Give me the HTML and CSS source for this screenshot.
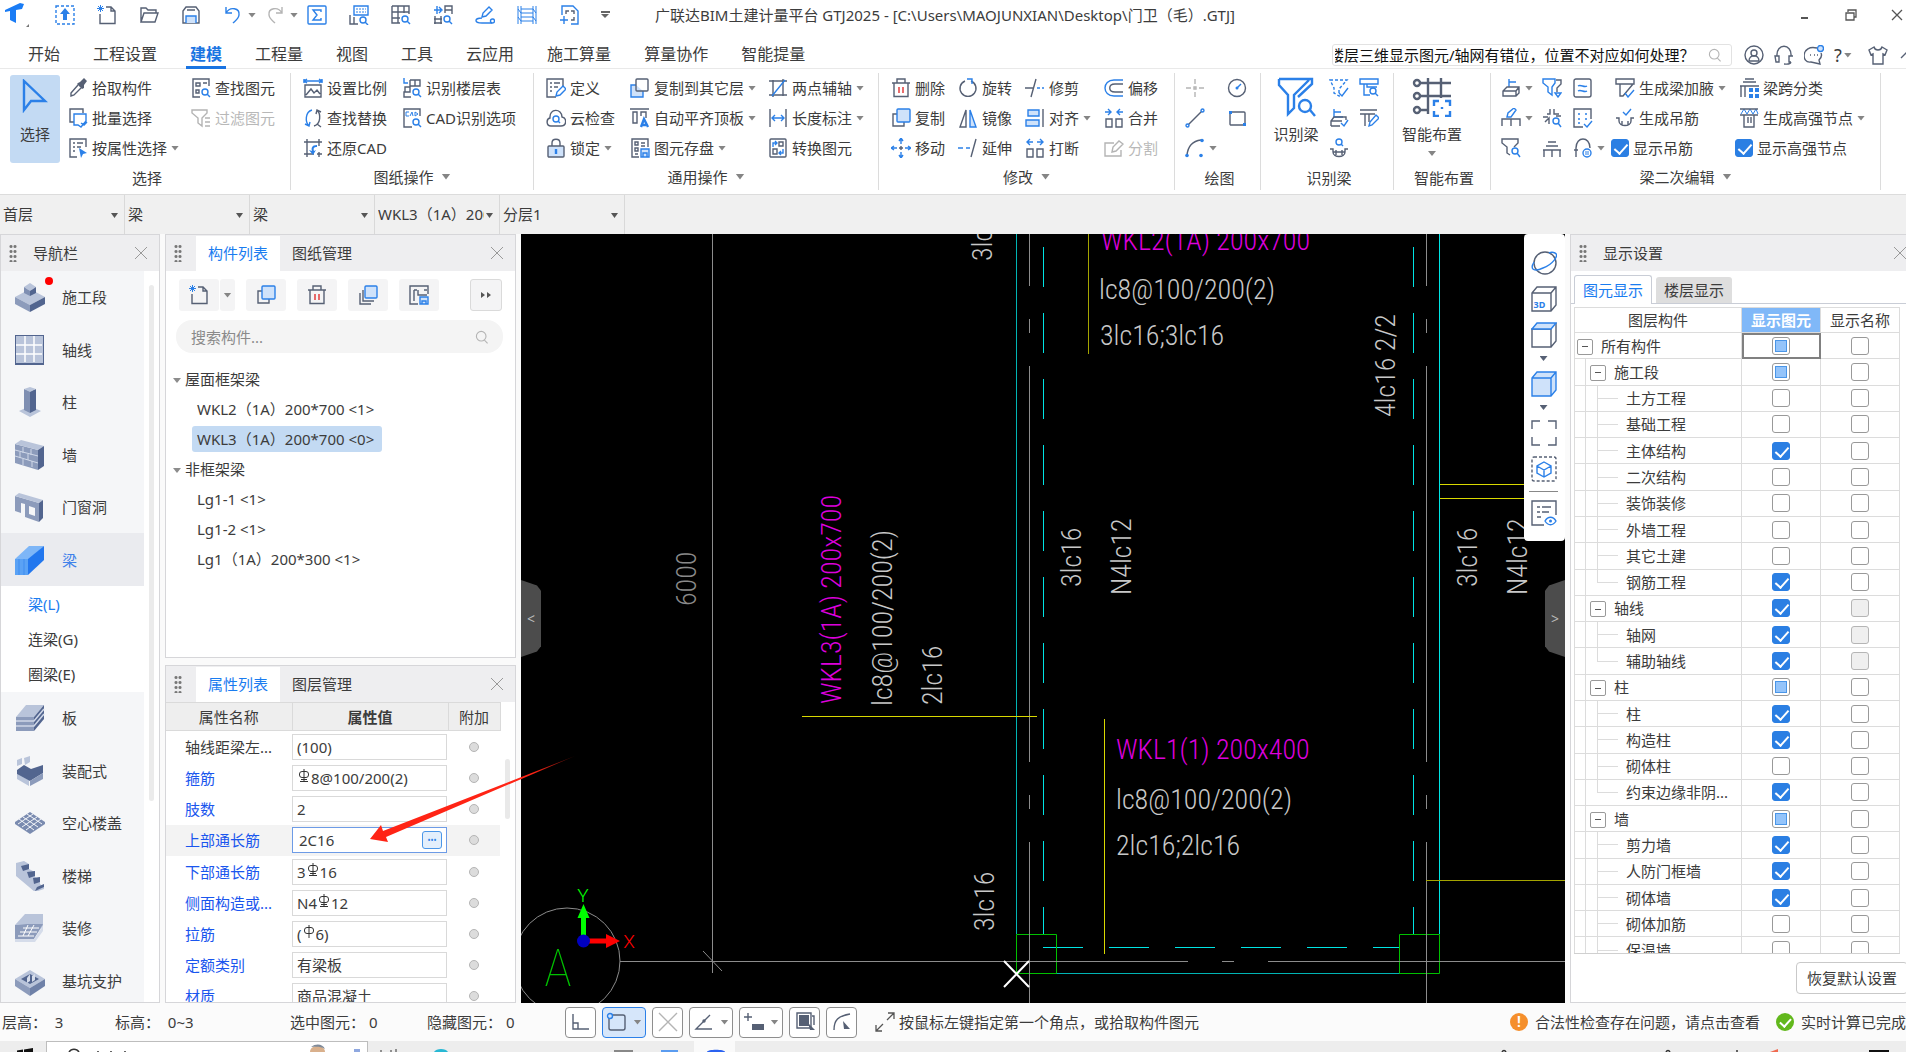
FILE: index.html
```html
<!DOCTYPE html>
<html lang="zh-CN">
<head>
<meta charset="utf-8">
<title>广联达BIM土建计量平台 GTJ2025</title>
<link rel="stylesheet" href="styles.css">
</head>
<body>
<svg class="defs" aria-hidden="true">
  <symbol id="i-marquee" viewBox="0 0 20 20"><rect class="b dash" x="1" y="1" width="18" height="18"/><path class="bf" d="M10 3l5 6h-3v6H8V9H5z"/></symbol>
  <symbol id="i-new" viewBox="0 0 20 20"><path class="d" d="M9 2h5l4 4v12.500H3V9M14 2v4h4"/><path class="b thin" d="M1 1l5 5M6 1L1 6M3.500 0v7M0 3.500h7"/></symbol>
  <symbol id="i-open" viewBox="0 0 20 20"><path class="d" d="M2 17V3h5l2 2h8v3M2 17l3-9h14l-3 9z"/></symbol>
  <symbol id="i-save" viewBox="0 0 20 20"><path class="d" d="M2 6l3-4h10l3 4v12H2zM6 5h8"/><path class="b f" d="M5 18v-7h10v7"/></symbol>
  <symbol id="i-undo" viewBox="0 0 20 20"><path class="b" d="M3 2v6h6M3 8c4-7 14-5 13 2-.500 4-4 6-6 8"/></symbol>
  <symbol id="i-redo" viewBox="0 0 20 20"><path class="g" d="M17 2v6h-6M17 8C13 1 3 3 4 10c.500 4 4 6 6 8"/></symbol>
  <symbol id="i-sum" viewBox="0 0 20 20"><rect class="b" x="1" y="1" width="18" height="18" rx="1"/><path class="b" d="M14 7V5H6l4 5-4 5h8v-2"/></symbol>
  <symbol id="i-keys" viewBox="0 0 20 20"><path class="b" d="M5 1h14v9H5z"/><path class="b thin" d="M7 4h10M7 7h10" stroke-dasharray="2 1"/><path class="d" d="M1 10v9h8M5 12v7"/><circle class="b" cx="14" cy="15" r="3"/><path class="b" d="M16 17l3 3"/></symbol>
  <symbol id="i-gridq" viewBox="0 0 20 20"><path class="d" d="M1 1h17v8M1 1v17h8M1 7h17M1 13h8M7 1v17M13 1v7"/><circle class="b" cx="14" cy="14" r="3"/><path class="b" d="M16 16l3 3"/></symbol>
  <symbol id="i-swapq" viewBox="0 0 20 20"><path class="b" d="M1 5h7M4 1v8M6 2l3 3-3 3"/><path class="d" d="M12 8V1h7v8M12 5h7M2 11v8M8 11v8M1 14h8M1 18h8"/><circle class="b" cx="14" cy="14" r="3"/><path class="b" d="M16 16l3 3"/></symbol>
  <symbol id="i-pen" viewBox="0 0 20 20"><path class="b" d="M7 12l1-4 6-6 3 3-6 6zM7 13c-8 0-8 5 0 5h10"/><circle class="b" cx="17.500" cy="16" r="2"/></symbol>
  <symbol id="i-bars" viewBox="0 0 20 20"><path class="b thin" d="M1 1v18M4 1v18M16 1v18M19 1v18M4 4h12M4 8h12M4 12h12M4 16h12M1 4l3 4M16 4l3 4M1 12l3 4M16 12l3 4"/></symbol>
  <symbol id="i-pageplus" viewBox="0 0 20 20"><path class="b" d="M3 10V1h11l5 5v13h-7"/><path class="d" d="M7 9V6h3M12 6h3v3M15 12v3h-3"/><path class="b" d="M1 15h8M5 11v8"/></symbol>
  <symbol id="i-cursor" viewBox="0 0 26 34"><path class="b thick" d="M2 2v29l7-9h14z"/></symbol>
  <symbol id="i-dropper" viewBox="0 0 20 20"><path class="df" d="M10 5l2-1 4-4 3 3-3 4v3l-2 1-5-5z"/><path class="d" d="M10 7l-7 8v3l3-1 7-7"/></symbol>
  <symbol id="i-batch" viewBox="0 0 20 20"><path class="d" d="M6 14H2V1h13v4"/><path class="b" d="M6 6h12v7l-5 6-3-2H6zM13 15l3 2 3-3"/></symbol>
  <symbol id="i-attr" viewBox="0 0 20 20"><path class="d" d="M18 9V1H2v18h7M5 5h2M9 5h6M5 9h2M9 9h4M5 13h2"/><path class="bf" d="M11 10l8 5-4 1-2 4z"/></symbol>
  <symbol id="i-findel" viewBox="0 0 20 20"><path class="d" d="M18 8V1H2v18h7M5 5h4v3H5zM12 5h4M5 12h3v3H5z"/><circle class="b" cx="14" cy="14" r="3"/><path class="b" d="M16 16l3 3"/></symbol>
  <symbol id="i-filter" viewBox="0 0 20 20"><path class="g" d="M1 2h15v3l-5 5v8l-4-3v-5L1 5zM14 10h5M14 14h5M14 18h5"/></symbol>
  <symbol id="i-scale" viewBox="0 0 20 20"><path class="b" d="M1 1v4M19 1v4M1 3h18M4 1l-3 2 3 2M16 1l3 2-3 2"/><path class="d" d="M2 7h16v12H2zM3 17l5-6 3 4 3-3 3 4"/></symbol>
  <symbol id="i-replace" viewBox="0 0 20 20"><path class="b" d="M9 2C2 4 2 14 6 18M2 16l4 2 1-4"/><path class="d" d="M11 18c7-2 7-12 3-16M18 4l-4-2-1 4M14 16l4 3"/></symbol>
  <symbol id="i-restore" viewBox="0 0 20 20"><path class="d" d="M4 1v18M1 4h18M16 1v7M1 16h10M16 14v5M14 16h5"/><path class="bf" d="M14 7c-5 0-6 3-5 6l-3-1 4 5 3-5-2 1c-1-3 0-4 3-4z"/></symbol>
  <symbol id="i-floor" viewBox="0 0 20 20"><path class="b" d="M2 0v5h4"/><path class="d" d="M8 2h10v6H8M13 2v6M8 2v12H2v5h7M8 9H3v5"/><circle class="b" cx="14" cy="14" r="3"/><path class="b" d="M16 16l3 3"/></symbol>
  <symbol id="i-cadopt" viewBox="0 0 20 20"><path class="d" d="M18 8V1H2v18h8"/><path class="b thin" d="M7 4H4v4h3M8 8l2-4 1 4M13 4v4l3-2z"/><circle class="b" cx="14" cy="14" r="3"/><path class="b" d="M16 16l3 3"/></symbol>
  <symbol id="i-define" viewBox="0 0 20 20"><path class="d" d="M17 8V1H1v18h9M4 5h2M8 5h6M4 9h2M8 9h4M4 13h2"/><path class="b" d="M10 18l1-4 6-6 3 3-6 6z"/></symbol>
  <symbol id="i-cloud" viewBox="0 0 20 20"><path class="d" d="M5 18c-5 0-5-7-1-8C3 0 16 0 16 9c5 1 5 9-1 9z"/><circle class="b" cx="10" cy="11" r="3"/><path class="b" d="M12 13l2 2"/></symbol>
  <symbol id="i-lock" viewBox="0 0 20 20"><path class="d" d="M6 8V5c0-5 8-5 8 0v3"/><rect class="d f" x="2" y="8" width="16" height="11" rx="1"/><path class="b thick" d="M10 11v5"/></symbol>
  <symbol id="i-copyfl" viewBox="0 0 20 20"><path class="b f" d="M6 7H1v12h12v-6"/><rect class="d" x="6" y="1" width="12" height="12" rx="1"/></symbol>
  <symbol id="i-aligntop" viewBox="0 0 20 20"><path class="d" d="M0 1h19M3 4h4v11H3zM11 8V4h5v6"/><path class="b thick" d="M11 19l3-8 4 8M12 17h4"/></symbol>
  <symbol id="i-store" viewBox="0 0 20 20"><path class="d" d="M18 9V1H2v18h7M5 4h3v3H5zM5 10h3v3H5zM11 5h4M11 8h4M5 16h3"/><path class="b f" d="M11 11h8v8h-8zM13 19v-4h4v4"/></symbol>
  <symbol id="i-twopt" viewBox="0 0 20 20"><path class="d" d="M5 2v17M15 1v17M1 3h18M1 17h18"/><path class="b" d="M4 18L17 2"/></symbol>
  <symbol id="i-length" viewBox="0 0 20 20"><path class="d" d="M2 1v18M18 1v18"/><path class="b" d="M4 10h12M7 7l-3 3 3 3M13 7l3 3-3 3"/></symbol>
  <symbol id="i-convert" viewBox="0 0 20 20"><rect class="d" x="2" y="1" width="16" height="18" rx="1"/><path class="d" d="M11 4h4v4h-4zM5 11h4v5H5z"/><path class="b" d="M5 9V5h4M15 11v4h-4M7 3l2 2-2 2M13 13l-2 2 2 2"/></symbol>
  <symbol id="i-trash" viewBox="0 0 20 20"><path class="d" d="M1 5h18M6 5V1h8v4M3 5v13.500h14V5"/><path class="r" d="M8 9v6M12 9v6"/></symbol>
  <symbol id="i-copy" viewBox="0 0 20 20"><path class="d" d="M6 6H2v12h11v-4"/><rect class="b f" x="6" y="1" width="13" height="13" rx="1"/></symbol>
  <symbol id="i-move" viewBox="0 0 20 20"><path class="b" d="M10 0v6M10 14v6M0 10h6M14 10h6M8 3l2-3 2 3M8 17l2 3 2-3M3 8l-3 2 3 2M17 8l3 2-3 2"/><path class="d" d="M10 8v4M8 10h4"/></symbol>
  <symbol id="i-rotate" viewBox="0 0 20 20"><path class="d" d="M7 3a8 8 0 1 0 6 0"/><path class="b" d="M9 1h5v5"/></symbol>
  <symbol id="i-mirror" viewBox="0 0 20 20"><path class="d" d="M8 2v17H2z"/><path class="b f" d="M12 2v17h6z"/></symbol>
  <symbol id="i-extend" viewBox="0 0 20 20"><path class="b" d="M0 10h5M8 10h4"/><path class="d" d="M13 19l5-18"/></symbol>
  <symbol id="i-trim" viewBox="0 0 20 20"><path class="d" d="M0 10h9M6 19l5-18"/><path class="b" d="M12 10h3M17 10h2"/></symbol>
  <symbol id="i-align" viewBox="0 0 20 20"><path class="b f" d="M3 2h11v6H3zM1 12h13v6H1z"/><path class="d" d="M18 1v18"/></symbol>
  <symbol id="i-break" viewBox="0 0 20 20"><path class="d" d="M2 11h6v8H2zM12 11h6v8h-6z"/><path class="b" d="M8 4H2M5 1L2 4l3 3M12 4h6M15 1l3 3-3 3"/></symbol>
  <symbol id="i-merge" viewBox="0 0 20 20"><path class="d" d="M2 11h6v8H2zM12 11h6v8h-6z"/><path class="b" d="M1 4h6M4 1l3 3-3 3M19 4h-6M16 1l-3 3 3 3"/></symbol>
  <symbol id="i-offset" viewBox="0 0 20 20"><path class="b" d="M19 2H10C-2 2-2 18 10 18h9"/><path class="d" d="M19 6h-8c-7 0-7 8 0 8h8"/></symbol>
  <symbol id="i-split" viewBox="0 0 20 20"><path class="g" d="M10 5H1v13h16v-6M8 14l1-5 6-6 4 3-7 7z"/></symbol>
  <symbol id="i-point" viewBox="0 0 20 20"><path class="g" d="M10 1v5M10 14v5M1 10h5M14 10h5M9 9h2v2H9z"/></symbol>
  <symbol id="i-circle" viewBox="0 0 20 20"><circle class="d" cx="10" cy="10" r="8.500"/><path class="b" d="M10 10l4-4"/><circle class="bf" cx="10" cy="10" r="1.500"/></symbol>
  <symbol id="i-line" viewBox="0 0 20 20"><path class="d" d="M3 17L17 3"/><circle class="b" cx="2.500" cy="17.500" r="1.500"/><circle class="b" cx="17.500" cy="2.500" r="1.500"/></symbol>
  <symbol id="i-rect" viewBox="0 0 20 20"><rect class="d" x="3" y="4" width="15" height="13" rx="1"/><path class="bf" d="M2 3h3v3H2zM16 15h3v3h-3z"/></symbol>
  <symbol id="i-arc" viewBox="0 0 20 20"><path class="d" d="M2 17C3 8 8 3 16 2"/><circle class="bf" cx="2" cy="17.500" r="1.800"/><circle class="bf" cx="17" cy="2.500" r="1.800"/><circle class="bf" cx="16" cy="17.500" r="1.800"/></symbol>
  <symbol id="i-idbeam" viewBox="0 0 40 40"><path class="b thick" d="M3 2h33v5L22 20M3 2v6l9 10v19l6-6V18L33 3"/><circle class="b thick" cx="29" cy="29" r="6"/><path class="b thick" d="M34 33l5 6"/></symbol>
  <symbol id="i-smart" viewBox="0 0 40 40"><path class="d thick" d="M8 6h31M8 19h31M8 33h8M16 1v36M29 1v20"/><circle class="d thick" cx="5" cy="6" r="3"/><circle class="d thick" cx="5" cy="19" r="3"/><circle class="d thick" cx="5" cy="33" r="3"/><path class="b thick" d="M22 29v-5h5M33 24h5v5M38 34v5h-5M27 39h-5v-5M30 30v2"/></symbol>
  <symbol id="i-f1" viewBox="0 0 20 20"><path class="b dash" d="M1 2h17l-8 9v7l-5-3v-5z"/><path class="b" d="M10 15l3 3 6-8"/></symbol>
  <symbol id="i-f2" viewBox="0 0 20 20"><path class="b" d="M1 6V1h18v5zM5 6v11h6M8 6v3h10"/><circle class="b" cx="14" cy="13" r="3"/><path class="b" d="M16 15l3 3"/></symbol>
  <symbol id="i-f3" viewBox="0 0 20 20"><path class="b" d="M5 1v8h9M5 4h7"/><path class="d" d="M2 18v-5l3-4h12v3M2 13h11M2 18h9"/><path class="b" d="M12 15l3 3 4-6"/></symbol>
  <symbol id="i-f4" viewBox="0 0 20 20"><path class="d" d="M1 2h17M1 6h15M6 6v12M10 6v8"/><path class="b" d="M10 18l1-4 6-7 3 3-7 7z"/></symbol>
  <symbol id="i-f5" viewBox="0 0 20 20"><circle class="b" cx="10" cy="4" r="3"/><path class="b" d="M12 6l2 2"/><path class="d" d="M1 11h3v3c0 6 12 6 12 0v-3h3M7 12v5M13 12v5M4 14h12"/></symbol>
  <symbol id="i-s1" viewBox="0 0 20 20"><path class="b" d="M8 1v8M8 4h7"/><path class="d" d="M2 18v-5l4-4h12v6l-3 3H2zM2 13h13v5M15 13l3-4"/></symbol>
  <symbol id="i-s2" viewBox="0 0 20 20"><path class="b" d="M6 9l1-4 6-5 2 2-5 7z"/><path class="d" d="M1 18v-7h18v7M10 11v7"/></symbol>
  <symbol id="i-s3" viewBox="0 0 20 20"><path class="d" d="M9 17l-3-2V9L1 5V1h16v4l-4 4"/><circle class="b" cx="14" cy="13" r="3"/><path class="b" d="M16 15l3 4"/></symbol>
  <symbol id="i-s4" viewBox="0 0 20 20"><path class="b" d="M1 1h12v4l-3 4v8l-4-3V9L1 5z"/><path class="d" d="M14 2h5v4l-4 4v4"/><path class="b" d="M13 15h6l-3 4z"/></symbol>
  <symbol id="i-s5" viewBox="0 0 20 20"><path class="d" d="M8 1v5H5M12 1v5h5M1 9h5M14 8h5M3 14l4-4v6"/><circle class="b" cx="14" cy="13" r="3"/><path class="b" d="M16 15l3 4"/></symbol>
  <symbol id="i-s6" viewBox="0 0 20 20"><path class="d" d="M6 4h8M4 8h12M1 12h18M2 12v7M10 12v7M18 12v7"/></symbol>
  <symbol id="i-s7" viewBox="0 0 20 20"><rect class="d" x="1" y="1" width="17" height="18" rx="2"/><path class="b" d="M5 8c3-2 6 2 9 0M5 13c3-2 6 2 9 0"/></symbol>
  <symbol id="i-s8" viewBox="0 0 20 20"><path class="d" d="M18 11V1H1v18h9"/><path class="b" d="M5 6h2M12 6h2M5 11h2M12 11h2M5 15h2M11 16l3 3 5-6"/></symbol>
  <symbol id="i-s9" viewBox="0 0 20 20"><path class="d" d="M3 19v-9c0-12 14-12 14 0M1 12h4"/><circle class="b" cx="14" cy="15" r="4"/><path class="b thin" d="M12 14h4M12 16h4"/></symbol>
  <symbol id="i-haunch" viewBox="0 0 20 20"><path class="d" d="M1 6V1h18v5zM5 6v12h3L18 6"/><path class="b" d="M10 15l3 4 6-7"/></symbol>
  <symbol id="i-hanger" viewBox="0 0 20 20"><path class="b" d="M8 4l3 3 5-6"/><path class="d" d="M1 10h3v3c0 6 12 6 12 0v-3h3M7 13v4M13 13v4"/></symbol>
  <symbol id="i-span" viewBox="0 0 20 20"><path class="d" d="M6 1h9M4 4h13M1 8h19M2 8v11M6 8v11"/><path class="bf" d="M10 10h4v4h-4zM16 10h4v4h-4zM10 16h4v4h-4zM16 16h4v4h-4z"/></symbol>
  <symbol id="i-node" viewBox="0 0 20 20"><path class="b thin" d="M2 6l3-5 3 5 3-5 3 5 3-5 2 5"/><path class="d" d="M1 1h18M1 7h18M5 7v12h10V7M9 9v6M12 9v6"/></symbol>
  <symbol id="i-search" viewBox="0 0 20 20"><circle class="g" cx="9" cy="9" r="6"/><path class="g" d="M13 14l4 4"/></symbol>
  <symbol id="i-user" viewBox="0 0 20 20"><circle class="d" cx="10" cy="10" r="9"/><circle class="d" cx="10" cy="8" r="3"/><path class="d" d="M5 16c0-7 10-7 10 0z"/></symbol>
  <symbol id="i-phone" viewBox="0 0 20 20"><path class="d" d="M3 11C2-2 18-2 17 11M1 11h4v6H2zM19 11h-4v6h2M17 17c-1 3-4 2-7 2"/></symbol>
  <symbol id="i-chat" viewBox="0 0 20 20"><path class="d" d="M13 3C-3-1-3 19 7 17l9 2-1-4c3-3 3-5 2-7M6 10h1M10 10h1M13 10h1"/><circle class="b f" cx="16.500" cy="3.500" r="3"/></symbol>
  <symbol id="i-shirt" viewBox="0 0 20 20"><path class="d" d="M6 2L1 5l2 5 2-1v10h10V9l2 1 2-5-5-3c-1 4-7 4-8 0z"/></symbol>
  <symbol id="i-batchcopy" viewBox="0 0 20 20"><path class="d" d="M2 8v11h11M5 5v11h11"/><rect class="b f" x="7" y="1" width="12" height="12" rx="1"/></symbol>
  <symbol id="i-store2" viewBox="0 0 20 20"><path class="d" d="M19 9V1H1v18h8M5 5v11M5 5h3M9 5v5h9M15 5h3"/><path class="b f" d="M11 12h8v7h-8zM13 19v-3h4v3"/></symbol>
  <symbol id="i-orbit" viewBox="0 0 26 26"><circle class="d" cx="14" cy="13" r="11"/><path class="b" d="M3 12c-5 8 1 10 9 6 9-3 17-13 12-15-2-1-4-1-6 0"/></symbol>
  <symbol id="i-cube3d" viewBox="0 0 26 26"><path class="d" d="M1 7l5-6h19v18l-5 6H1zM1 7h19v18M20 7l5-6"/></symbol>
  <symbol id="i-cubetop" viewBox="0 0 26 26"><path class="d" d="M1 7h19v18H1zM20 25l5-6V1"/><path class="b f" d="M1 7l5-6h19l-5 6z"/></symbol>
  <symbol id="i-cube" viewBox="0 0 26 26"><path class="b f" d="M1 7l5-6h19v18l-5 6H1zM1 7h19v18M20 7l5-6"/></symbol>
  <symbol id="i-fit" viewBox="0 0 26 26"><path class="d" d="M1 9V1h8M17 1h8v8M25 17v8h-8M9 25H1v-8"/></symbol>
  <symbol id="i-boxsel" viewBox="0 0 26 26"><rect class="d dash" x="1" y="1" width="24" height="24" rx="2"/><path class="b" d="M13 6l7 4v7l-7 4-7-4v-7zM6 10l7 4 7-4M13 14v7"/></symbol>
  <symbol id="i-listeye" viewBox="0 0 26 26"><path class="d" d="M25 15V1H1v24h12M6 7h3M11 7h9M6 12h3M11 12h7M6 17h4"/><path class="b" d="M14 21c3-5 8-5 11 0-3 5-8 5-11 0z"/><circle class="bf" cx="19.500" cy="21" r="1.500"/></symbol>
  <symbol id="i-hrb" viewBox="0 0 12 14"><rect class="k" x="1.500" y="2.500" width="9" height="6" rx="2.500"/><path class="k" d="M6 0v13M3 10.500h6M2 12.500h8"/></symbol>
  <symbol id="i-hpb" viewBox="0 0 12 14"><rect class="k" x="1.500" y="2.500" width="9" height="6" rx="2.500"/><path class="k" d="M6 0v13"/></symbol>
  <symbol id="n-stage" viewBox="0 0 30 30"><path fill="#b9c4da" d="M0 15l15-8 15 8-15 8z"/><path fill="#8c9bbb" d="M0 15l15 8v7L0 22z"/><path fill="#52658f" d="M30 15l-15 8v7l15-8z"/><path fill="#b9c4da" d="M9 5l6-4 6 4-6 4z"/><path fill="#7f8fb2" d="M9 5l6 4v5l-6-3z"/><path fill="#52658f" d="M21 5l-6 4v5l6-3z"/></symbol>
  <symbol id="n-axis" viewBox="0 0 30 30"><path fill="#52658f" d="M0 0h29v30H0z"/><path fill="#b9c4da" d="M1 1h27v27H1z"/><path stroke="#fff" stroke-width="1.500" d="M10 1v26M19 1v26M1 10h26M1 19h26"/></symbol>
  <symbol id="n-column" viewBox="0 0 30 30"><path fill="#b9c4da" d="M4 24l11-5 11 5-11 6z"/><path fill="#7f8fb2" d="M9 2l6 2v22l-6-3z"/><path fill="#52658f" d="M21 2l-6 2v22l6-3z"/><path fill="#b9c4da" d="M9 2l6-2 6 2-6 3z"/></symbol>
  <symbol id="n-wall" viewBox="0 0 30 30"><path fill="#8c9bbb" d="M0 4l23 6v20L0 23z"/><path fill="#b9c4da" d="M0 4l6-4 23 6-6 4z"/><path fill="#52658f" d="M23 10l6-4v20l-6 4z"/><path fill="none" stroke="#d0d8e8" d="M0 10l23 6M0 16l23 7M8 7v6M16 9v6M5 12v6M13 14v6M8 19v6M17 21v6"/></symbol>
  <symbol id="n-door" viewBox="0 0 30 30"><path fill="#8c9bbb" fill-rule="evenodd" d="M0 4l24 7v19l-14-5V12l-4-1v10l-6-2zM14 14v8l6 2v-8z"/><path fill="#b9c4da" d="M0 4l4-3 24 7-4 3z"/><path fill="#52658f" d="M24 11l4-3v18l-4 4z"/></symbol>
  <symbol id="n-beam" viewBox="0 0 30 30"><path fill="#7eb6f7" d="M0 14L14 1h15L15 14z"/><path fill="#5aa2f5" d="M0 14h13v16H0z"/><path fill="#2277ee" d="M13 14L29 1v14L13 30z"/><path stroke="#3e8df0" d="M4 14v16M9 14v16"/></symbol>
  <symbol id="n-slab" viewBox="0 0 30 30"><path fill="#b9c4da" d="M1 14L11 2h18L19 14z"/><path fill="#8c9bbb" d="M1 14h18v14H1z"/><path fill="#52658f" d="M19 14L29 2v14L19 28z"/><path stroke="#d0d8e8" stroke-width="1.500" fill="none" d="M1 18h18L29 6M1 23h18l10-12"/></symbol>
  <symbol id="n-prefab" viewBox="0 0 30 30"><path fill="#b9c4da" d="M2 4l5-2v6l-5 2zM9 2l6-2v6l-5 3zM2 18l12 6v6L2 23z"/><path fill="#52658f" d="M2 14l7-5 7 4 12-4v8l-13 8-13-7z"/><path fill="#8c9bbb" d="M15 25l13-8v6l-13 7z"/></symbol>
  <symbol id="n-hollow" viewBox="0 0 30 30"><path fill="#7a8bb0" d="M0 14L15 4l15 10v2L15 26 0 16z"/><path stroke="#f4f6fa" fill="none" d="M4 11l15 11M8 9l15 10M12 6l15 10M26 11L11 22M22 9L7 19M18 6L3 16"/></symbol>
  <symbol id="n-stair" viewBox="0 0 30 30"><path fill="#b9c4da" d="M1 2l8-2 5 3v5l6 3v5l5 3v4l4 3v2l-9 3L1 15z"/><path fill="#52658f" d="M6 5l8-2v5l-6 2zM12 11l8-1v5l-6 2zM18 17l7-1v5l-6 2zM22 26l7-3v3l-9 4z"/></symbol>
  <symbol id="n-decor" viewBox="0 0 30 30"><path fill="#b9c4da" d="M0 12L10 1h18v12l-8 10H0z"/><path fill="#8c9bbb" d="M0 12h3l9-1h16L19 26H0z"/><path stroke="#fff" fill="none" d="M8 15h16M5 19h17M3 23h16M13 12l-5 11M19 12l-6 11"/><path fill="#d5dcea" d="M0 26h19l9-13v5l-8 11H0z"/></symbol>
  <symbol id="n-pit" viewBox="0 0 30 30"><path fill="#b9c4da" d="M0 13L15 4l15 9-15 9z"/><path fill="#8c9bbb" d="M0 13l15 9v8L0 20z"/><path fill="#6f81a8" d="M30 13l-15 9v8l15-10z"/><path fill="#52658f" d="M6 13l9-5 9 5-9 5z"/><path fill="#d5dcea" d="M12 12l3-4v7l-3 2zM17 10l3-2v6l-3 2z"/></symbol>
</svg>

<header class="top">
  <div class="titlebar">
    <svg class="logo" viewBox="0 0 26 26"><path fill="#1a7cf5" d="M1 8L16 1l4 1-2 5-6 1v13l-6-3V9l-5 1z"/><path fill="#777" d="M25 22v3h-3z"/></svg>
    <nav class="quick" aria-label="快速访问">
      <button aria-label="框选"><svg class="ic"><use href="#i-marquee"/></svg></button>
      <button aria-label="新建"><svg class="ic"><use href="#i-new"/></svg></button>
      <button aria-label="打开"><svg class="ic"><use href="#i-open"/></svg></button>
      <button aria-label="保存"><svg class="ic"><use href="#i-save"/></svg></button>
      <button aria-label="撤销" class="drop tight"><svg class="ic"><use href="#i-undo"/></svg></button>
      <button aria-label="重做" class="drop tight off"><svg class="ic"><use href="#i-redo"/></svg></button>
      <button aria-label="汇总计算"><svg class="ic"><use href="#i-sum"/></svg></button>
      <button aria-label="查看计算式"><svg class="ic"><use href="#i-keys"/></svg></button>
      <button aria-label="查看工程量"><svg class="ic"><use href="#i-gridq"/></svg></button>
      <button aria-label="查看钢筋量"><svg class="ic"><use href="#i-swapq"/></svg></button>
      <button aria-label="编辑钢筋"><svg class="ic"><use href="#i-pen"/></svg></button>
      <button aria-label="钢筋三维"><svg class="ic"><use href="#i-bars"/></svg></button>
      <button aria-label="添加图纸"><svg class="ic"><use href="#i-pageplus"/></svg></button>
      <button aria-label="自定义" class="more"></button>
    </nav>
    <h1>广联达BIM土建计量平台 GTJ2025 - [C:\Users\MAOJUNXIAN\Desktop\门卫（毛）.GTJ]</h1>
    <div class="winctl">
      <button aria-label="最小化"><svg viewBox="0 0 14 14"><path class="k2" d="M3 10h7"/></svg></button>
      <button aria-label="还原"><svg viewBox="0 0 14 14"><path class="k1" d="M4 4V2h8v7h-2M2 5h8v7H2z"/></svg></button>
      <button aria-label="关闭"><svg viewBox="0 0 14 14"><path class="k1" d="M2 2l10 10M12 2L2 12"/></svg></button>
    </div>
  </div>
  <div class="menubar">
    <nav class="tabs" aria-label="功能区">
      <a href="#">开始</a><a href="#">工程设置</a><a href="#" class="on">建模</a><a href="#">工程量</a><a href="#">视图</a><a href="#">工具</a><a href="#">云应用</a><a href="#">施工算量</a><a href="#">算量协作</a><a href="#">智能提量</a>
    </nav>
    <div class="helpers">
      <div class="ask"><input aria-label="搜索帮助" value="楼层三维显示图元/轴网有错位，位置不对应如何处理？"><svg class="ic s16"><use href="#i-search"/></svg></div>
      <button aria-label="用户"><svg class="ic"><use href="#i-user"/></svg></button>
      <button aria-label="客服"><svg class="ic"><use href="#i-phone"/></svg></button>
      <button aria-label="消息"><svg class="ic"><use href="#i-chat"/></svg></button>
      <button aria-label="帮助" class="drop help">?</button>
      <button aria-label="皮肤"><svg class="ic"><use href="#i-shirt"/></svg></button>
      <button aria-label="收起"><svg class="ic" viewBox="0 0 20 20"><path class="d" d="M3 13l7-7 7 7"/></svg></button>
    </div>
  </div>
</header>

<section class="ribbon" aria-label="建模">
  <div class="group g1">
    <div class="body">
      <button class="big on"><svg class="cur"><use href="#i-cursor"/></svg>选择</button>
      <div class="cells">
        <button><svg class="ic"><use href="#i-dropper"/></svg>拾取构件</button><button><svg class="ic"><use href="#i-findel"/></svg>查找图元</button>
        <button><svg class="ic"><use href="#i-batch"/></svg>批量选择</button><button class="off" disabled><svg class="ic"><use href="#i-filter"/></svg>过滤图元</button>
        <button class="drop"><svg class="ic"><use href="#i-attr"/></svg>按属性选择</button>
      </div>
    </div>
    <h2>选择</h2>
  </div>
  <div class="group g2">
    <div class="body"><div class="cells">
      <button><svg class="ic"><use href="#i-scale"/></svg>设置比例</button><button><svg class="ic"><use href="#i-floor"/></svg>识别楼层表</button>
      <button><svg class="ic"><use href="#i-replace"/></svg>查找替换</button><button><svg class="ic"><use href="#i-cadopt"/></svg>CAD识别选项</button>
      <button><svg class="ic"><use href="#i-restore"/></svg>还原CAD</button>
    </div></div>
    <h2 class="drop">图纸操作</h2>
  </div>
  <div class="group g3">
    <div class="body"><div class="cells">
      <button><svg class="ic"><use href="#i-define"/></svg>定义</button><button class="drop"><svg class="ic"><use href="#i-copyfl"/></svg>复制到其它层</button><button class="drop"><svg class="ic"><use href="#i-twopt"/></svg>两点辅轴</button>
      <button><svg class="ic"><use href="#i-cloud"/></svg>云检查</button><button class="drop"><svg class="ic"><use href="#i-aligntop"/></svg>自动平齐顶板</button><button class="drop"><svg class="ic"><use href="#i-length"/></svg>长度标注</button>
      <button class="drop"><svg class="ic"><use href="#i-lock"/></svg>锁定</button><button class="drop"><svg class="ic"><use href="#i-store"/></svg>图元存盘</button><button><svg class="ic"><use href="#i-convert"/></svg>转换图元</button>
    </div></div>
    <h2 class="drop">通用操作</h2>
  </div>
  <div class="group g4">
    <div class="body"><div class="cells">
      <button><svg class="ic"><use href="#i-trash"/></svg>删除</button><button><svg class="ic"><use href="#i-rotate"/></svg>旋转</button><button><svg class="ic"><use href="#i-trim"/></svg>修剪</button><button><svg class="ic"><use href="#i-offset"/></svg>偏移</button>
      <button><svg class="ic"><use href="#i-copy"/></svg>复制</button><button><svg class="ic"><use href="#i-mirror"/></svg>镜像</button><button class="drop"><svg class="ic"><use href="#i-align"/></svg>对齐</button><button><svg class="ic"><use href="#i-merge"/></svg>合并</button>
      <button><svg class="ic"><use href="#i-move"/></svg>移动</button><button><svg class="ic"><use href="#i-extend"/></svg>延伸</button><button><svg class="ic"><use href="#i-break"/></svg>打断</button><button class="off" disabled><svg class="ic"><use href="#i-split"/></svg>分割</button>
    </div></div>
    <h2 class="drop">修改</h2>
  </div>
  <div class="group g5">
    <div class="body"><div class="cells">
      <button aria-label="点"><svg class="ic"><use href="#i-point"/></svg></button><button aria-label="圆"><svg class="ic"><use href="#i-circle"/></svg></button>
      <button aria-label="直线"><svg class="ic"><use href="#i-line"/></svg></button><button aria-label="矩形"><svg class="ic"><use href="#i-rect"/></svg></button>
      <button aria-label="弧" class="drop"><svg class="ic"><use href="#i-arc"/></svg></button>
    </div></div>
    <h2>绘图</h2>
  </div>
  <div class="group g6">
    <div class="body">
      <button class="big"><svg class="i40"><use href="#i-idbeam"/></svg>识别梁</button>
      <div class="cells">
        <button aria-label="校核梁图元"><svg class="ic"><use href="#i-f1"/></svg></button><button aria-label="查看支座"><svg class="ic"><use href="#i-f2"/></svg></button>
        <button aria-label="校核原位标注"><svg class="ic"><use href="#i-f3"/></svg></button><button aria-label="编辑支座"><svg class="ic"><use href="#i-f4"/></svg></button>
        <button aria-label="识别吊筋"><svg class="ic"><use href="#i-f5"/></svg></button>
      </div>
    </div>
    <h2>识别梁</h2>
  </div>
  <div class="group g7">
    <div class="body"><button class="big below"><svg class="i40"><use href="#i-smart"/></svg>智能布置</button></div>
    <h2>智能布置</h2>
  </div>
  <div class="group g8">
    <div class="body"><div class="cells">
      <button aria-label="原位标注" class="drop"><svg class="ic"><use href="#i-s1"/></svg></button><button aria-label="重提梁跨"><svg class="ic"><use href="#i-s4"/></svg></button><button aria-label="应用同名梁"><svg class="ic"><use href="#i-s7"/></svg></button><button class="in drop"><svg class="ic"><use href="#i-haunch"/></svg>生成梁加腋</button><button class="in"><svg class="ic"><use href="#i-span"/></svg>梁跨分类</button>
      <button aria-label="设置支座" class="drop"><svg class="ic"><use href="#i-s2"/></svg></button><button aria-label="刷新支座"><svg class="ic"><use href="#i-s5"/></svg></button><button aria-label="校核"><svg class="ic"><use href="#i-s8"/></svg></button><button class="in"><svg class="ic"><use href="#i-hanger"/></svg>生成吊筋</button><button class="in drop"><svg class="ic"><use href="#i-node"/></svg>生成高强节点</button>
      <button aria-label="梁跨复制"><svg class="ic"><use href="#i-s3"/></svg></button><button aria-label="架立筋"><svg class="ic"><use href="#i-s6"/></svg></button><button aria-label="复制" class="drop"><svg class="ic"><use href="#i-s9"/></svg></button><label><input type="checkbox" checked>显示吊筋</label><label><input type="checkbox" checked>显示高强节点</label>
    </div></div>
    <h2 class="drop">梁二次编辑</h2>
  </div>
</section>

<div class="combos">
  <label><select aria-label="楼层"><option>首层</option></select></label>
  <label><select aria-label="构件大类"><option>梁</option></select></label>
  <label><select aria-label="构件类型"><option>梁</option></select></label>
  <label><select aria-label="构件"><option>WKL3（1A）200*700</option></select></label>
  <label><select aria-label="分层"><option>分层1</option></select></label>
</div>

<main class="work">
  <aside class="panel nav">
    <div class="phead"><i class="grip"></i><span>导航栏</span><button class="x" aria-label="关闭"></button></div>
    <div class="navbody">
      <ul>
        <li><a href="#"><svg><use href="#n-stage"/></svg>施工段<i class="dot"></i></a></li>
        <li><a href="#"><svg><use href="#n-axis"/></svg>轴线</a></li>
        <li><a href="#"><svg><use href="#n-column"/></svg>柱</a></li>
        <li><a href="#"><svg><use href="#n-wall"/></svg>墙</a></li>
        <li><a href="#"><svg><use href="#n-door"/></svg>门窗洞</a></li>
        <li><a href="#" class="on"><svg><use href="#n-beam"/></svg>梁</a>
          <ul class="sub"><li><a href="#" class="on">梁(L)</a></li><li><a href="#">连梁(G)</a></li><li><a href="#">圈梁(E)</a></li></ul></li>
        <li><a href="#"><svg><use href="#n-slab"/></svg>板</a></li>
        <li><a href="#"><svg><use href="#n-prefab"/></svg>装配式</a></li>
        <li><a href="#"><svg><use href="#n-hollow"/></svg>空心楼盖</a></li>
        <li><a href="#"><svg><use href="#n-stair"/></svg>楼梯</a></li>
        <li><a href="#"><svg><use href="#n-decor"/></svg>装修</a></li>
        <li><a href="#"><svg><use href="#n-pit"/></svg>基坑支护</a></li>
      </ul>
      <div class="track"><i></i></div>
    </div>
  </aside>

  <div class="mid">
    <section class="panel list">
      <div class="phead"><i class="grip"></i><a href="#" class="ptab on">构件列表</a><a href="#" class="ptab">图纸管理</a><button class="x" aria-label="关闭"></button></div>
      <div class="tools">
        <div class="pair"><button aria-label="新建"><svg class="ic"><use href="#i-new"/></svg></button><button class="drop" aria-label="新建选项"></button></div>
        <button aria-label="复制"><svg class="ic"><use href="#i-copy"/></svg></button>
        <button aria-label="删除"><svg class="ic"><use href="#i-trash"/></svg></button>
        <button aria-label="层间复制"><svg class="ic"><use href="#i-batchcopy"/></svg></button>
        <button aria-label="存档"><svg class="ic"><use href="#i-store2"/></svg></button>
        <button class="next" aria-label="更多"><svg viewBox="0 0 12 8"><path d="M1 1l4 3-4 3zM7 1l4 3-4 3z"/></svg></button>
      </div>
      <div class="find"><input aria-label="搜索构件" placeholder="搜索构件..."><svg class="ic s16"><use href="#i-search"/></svg></div>
      <ul class="tree">
        <li class="branch">屋面框架梁</li>
        <li><span>WKL2（1A）200*700 &lt;1&gt;</span></li>
        <li><span class="on">WKL3（1A）200*700 &lt;0&gt;</span></li>
        <li class="branch">非框架梁</li>
        <li><span>Lg1-1 &lt;1&gt;</span></li>
        <li><span>Lg1-2 &lt;1&gt;</span></li>
        <li><span>Lg1（1A）200*300 &lt;1&gt;</span></li>
      </ul>
    </section>
    <section class="panel props">
      <div class="phead"><i class="grip"></i><a href="#" class="ptab on">属性列表</a><a href="#" class="ptab">图层管理</a><button class="x" aria-label="关闭"></button></div>
      <div class="scroll">
        <table>
          <thead><tr><th>属性名称</th><th class="strong">属性值</th><th>附加</th></tr></thead>
          <tbody>
            <tr><th class="plain">轴线距梁左...</th><td><div class="field"><input aria-label="轴线距梁左边线距离" value="(100)"></div></td><td><input type="radio" aria-label="附加"></td></tr>
            <tr><th>箍筋</th><td><div class="field"><svg><use href="#i-hrb"/></svg><input aria-label="箍筋" value="8@100/200(2)"></div></td><td><input type="radio" aria-label="附加"></td></tr>
            <tr><th>肢数</th><td><div class="field"><input aria-label="肢数" value="2"></div></td><td><input type="radio" aria-label="附加"></td></tr>
            <tr class="on"><th>上部通长筋</th><td><div class="field"><input aria-label="上部通长筋" value="2C16"><button aria-label="更多">•••</button></div></td><td><input type="radio" aria-label="附加"></td></tr>
            <tr><th>下部通长筋</th><td><div class="field"><span>3</span><svg><use href="#i-hrb"/></svg><input aria-label="下部通长筋" value="16"></div></td><td><input type="radio" aria-label="附加"></td></tr>
            <tr><th>侧面构造或...</th><td><div class="field"><span>N4</span><svg><use href="#i-hrb"/></svg><input aria-label="侧面构造或受扭筋" value="12"></div></td><td><input type="radio" aria-label="附加"></td></tr>
            <tr><th>拉筋</th><td><div class="field"><span>(</span><svg><use href="#i-hpb"/></svg><input aria-label="拉筋" value="6)"></div></td><td><input type="radio" aria-label="附加"></td></tr>
            <tr><th>定额类别</th><td><div class="field"><input aria-label="定额类别" value="有梁板"></div></td><td><input type="radio" aria-label="附加"></td></tr>
            <tr><th>材质</th><td><div class="field"><input aria-label="材质" value="商品混凝土"></div></td><td><input type="radio" aria-label="附加"></td></tr>
          </tbody>
        </table>
        <i class="thumb"></i>
      </div>
    </section>
  </div>

  <section class="canvas" aria-label="绘图区">
    <svg class="cad">
      <g transform="translate(-521 -234)">
        <g class="ln gray">
          <path d="M712.500 234V973M703 951l19 20M620 961.500H1188M1222 961.500h12M1268 961.500h297"/>
          <path d="M1029.500 234V286M1029.500 319v14M1029.500 366V762M1029.500 795v14M1029.500 842V1003"/>
          <path d="M1426.500 234V286M1426.500 319v14M1426.500 366V762M1426.500 795v14M1426.500 842V1003"/>
          <circle cx="567" cy="961" r="53"/>
        </g>
        <g class="ln cyan">
          <path d="M1016.500 234V934M1056 973.500H1400"/>
          <path class="bright" d="M1439.500 234V934"/>
          <path class="dashes bright" d="M1043.500 247V934M1413.500 247V934"/>
          <path class="dashes bright" d="M1043 947.500H1400"/>
        </g>
        <g class="ln yellow">
          <path class="dim" d="M1088.500 234V354M1426 880.500H1565"/>
          <path d="M1440 484.500h125M1440 498.500h125M802 716.500h235M1104.500 719V954"/>
        </g>
        <path class="ln green" fill="#000" d="M1016.500 934.500h40v39h-40zM1399.500 934.500h40v39h-40z"/>
        <path class="ln gray" d="M1029.500 934v40M1426.500 934v40M1016 961.500h41M1399 961.500h41"/>
        <path class="cross" d="M1004 961l25 26M1029 961l-25 26"/>
        <g class="txt mag">
          <text x="1101" y="250">WKL2(1A) 200x700</text>
          <text x="1116" y="759">WKL1(1) 200x400</text>
          <text transform="translate(841 704) rotate(-90)">WKL3(1A) 200x700</text>
        </g>
        <g class="txt">
          <text x="1099" y="299">lc8@100/200(2)</text>
          <text x="1100" y="345">3lc16;3lc16</text>
          <text x="1116" y="809">lc8@100/200(2)</text>
          <text x="1116" y="855">2lc16;2lc16</text>
          <text transform="translate(892 706) rotate(-90)">lc8@100/200(2)</text>
          <text transform="translate(942 705) rotate(-90)">2lc16</text>
          <text transform="translate(992 261) rotate(-90)">3lc16</text>
          <text transform="translate(1081 587) rotate(-90)">3lc16</text>
          <text transform="translate(1131 595) rotate(-90)">N4lc12</text>
          <text transform="translate(1477 587) rotate(-90)">3lc16</text>
          <text transform="translate(1527 595) rotate(-90)">N4lc12</text>
          <text transform="translate(1395 417) rotate(-90)">4lc16 2/2</text>
          <text transform="translate(994 931) rotate(-90)">3lc16</text>
          <text class="faint" transform="translate(696 606) rotate(-90)">6000</text>
        </g>
        <text class="mark" x="558" y="986">A</text>
        <g>
          <path fill="#00ff00" d="M581 918h5v18h-5zM583.500 904l6 14h-12z"/>
          <path fill="#ff0000" d="M588 938.500h18v5h-18zM620 941l-14 7v-14z"/>
          <circle cx="583.500" cy="941" r="6.500" fill="#0000c0"/>
          <text class="axis gy" x="583" y="902">Y</text><text class="axis rx" x="629" y="948">X</text>
        </g>
      </g>
    </svg>
    <button class="handle left" aria-label="收起左侧">&lt;</button>
    <button class="handle right" aria-label="收起右侧">&gt;</button>
    <div class="viewbar">
      <button aria-label="动态观察"><svg><use href="#i-orbit"/></svg></button>
      <button aria-label="三维" class="v3d"><svg><use href="#i-cube3d"/></svg><b>3D</b></button>
      <button aria-label="俯视" class="below"><svg><use href="#i-cubetop"/></svg></button>
      <button aria-label="实体" class="below"><svg><use href="#i-cube"/></svg></button>
      <button aria-label="全屏"><svg><use href="#i-fit"/></svg></button>
      <button aria-label="局部三维"><svg><use href="#i-boxsel"/></svg></button>
      <hr>
      <button aria-label="显示设置"><svg><use href="#i-listeye"/></svg></button>
    </div>
  </section>

  <aside class="panel display">
    <div class="phead"><i class="grip"></i><span>显示设置</span><button class="x" aria-label="关闭"></button></div>
    <div class="dtabs"><a href="#" class="on">图元显示</a><a href="#">楼层显示</a></div>
    <div class="dscroll">
      <table>
        <thead><tr><th>图层构件</th><th class="sel">显示图元</th><th>显示名称</th></tr></thead>
        <tbody>
          <tr class="l0"><th><i class="tog"></i>所有构件</th><td class="focus"><input type="checkbox" class="mixed" aria-label="显示图元"></td><td><input type="checkbox" aria-label="显示名称"></td></tr>
          <tr class="l1"><th><i class="tog"></i>施工段</th><td><input type="checkbox" class="mixed" aria-label="显示图元"></td><td><input type="checkbox" aria-label="显示名称"></td></tr>
          <tr><th>土方工程</th><td><input type="checkbox" aria-label="显示图元"></td><td><input type="checkbox" aria-label="显示名称"></td></tr>
          <tr><th>基础工程</th><td><input type="checkbox" aria-label="显示图元"></td><td><input type="checkbox" aria-label="显示名称"></td></tr>
          <tr><th>主体结构</th><td><input type="checkbox" checked aria-label="显示图元"></td><td><input type="checkbox" aria-label="显示名称"></td></tr>
          <tr><th>二次结构</th><td><input type="checkbox" aria-label="显示图元"></td><td><input type="checkbox" aria-label="显示名称"></td></tr>
          <tr><th>装饰装修</th><td><input type="checkbox" aria-label="显示图元"></td><td><input type="checkbox" aria-label="显示名称"></td></tr>
          <tr><th>外墙工程</th><td><input type="checkbox" aria-label="显示图元"></td><td><input type="checkbox" aria-label="显示名称"></td></tr>
          <tr><th>其它土建</th><td><input type="checkbox" aria-label="显示图元"></td><td><input type="checkbox" aria-label="显示名称"></td></tr>
          <tr class="end"><th>钢筋工程</th><td><input type="checkbox" checked aria-label="显示图元"></td><td><input type="checkbox" aria-label="显示名称"></td></tr>
          <tr class="l1"><th><i class="tog"></i>轴线</th><td><input type="checkbox" checked aria-label="显示图元"></td><td><input type="checkbox" disabled aria-label="显示名称"></td></tr>
          <tr><th>轴网</th><td><input type="checkbox" checked aria-label="显示图元"></td><td><input type="checkbox" disabled aria-label="显示名称"></td></tr>
          <tr class="end"><th>辅助轴线</th><td><input type="checkbox" checked aria-label="显示图元"></td><td><input type="checkbox" disabled aria-label="显示名称"></td></tr>
          <tr class="l1"><th><i class="tog"></i>柱</th><td><input type="checkbox" class="mixed" aria-label="显示图元"></td><td><input type="checkbox" aria-label="显示名称"></td></tr>
          <tr><th>柱</th><td><input type="checkbox" checked aria-label="显示图元"></td><td><input type="checkbox" aria-label="显示名称"></td></tr>
          <tr><th>构造柱</th><td><input type="checkbox" checked aria-label="显示图元"></td><td><input type="checkbox" aria-label="显示名称"></td></tr>
          <tr><th>砌体柱</th><td><input type="checkbox" aria-label="显示图元"></td><td><input type="checkbox" aria-label="显示名称"></td></tr>
          <tr class="end"><th>约束边缘非阴...</th><td><input type="checkbox" checked aria-label="显示图元"></td><td><input type="checkbox" aria-label="显示名称"></td></tr>
          <tr class="l1"><th><i class="tog"></i>墙</th><td><input type="checkbox" class="mixed" aria-label="显示图元"></td><td><input type="checkbox" aria-label="显示名称"></td></tr>
          <tr><th>剪力墙</th><td><input type="checkbox" checked aria-label="显示图元"></td><td><input type="checkbox" aria-label="显示名称"></td></tr>
          <tr><th>人防门框墙</th><td><input type="checkbox" checked aria-label="显示图元"></td><td><input type="checkbox" aria-label="显示名称"></td></tr>
          <tr><th>砌体墙</th><td><input type="checkbox" checked aria-label="显示图元"></td><td><input type="checkbox" aria-label="显示名称"></td></tr>
          <tr><th>砌体加筋</th><td><input type="checkbox" aria-label="显示图元"></td><td><input type="checkbox" aria-label="显示名称"></td></tr>
          <tr><th>保温墙</th><td><input type="checkbox" aria-label="显示图元"></td><td><input type="checkbox" aria-label="显示名称"></td></tr>
        </tbody>
      </table>
    </div>
    <div class="dfoot"><button>恢复默认设置</button></div>
  </aside>
  <svg class="pointer" viewBox="0 0 206 90" aria-hidden="true"><defs><linearGradient id="fade"><stop offset=".8" stop-color="#ff2415"/><stop offset="1" stop-color="#ff2415" stop-opacity=".3"/></linearGradient></defs><path fill="url(#fade)" d="M0 84L11 70l2 6L205 1 16 82l2 5z"/></svg>
</main>

<footer class="status">
  <div class="facts"><span>层高：&nbsp; 3</span><span>标高：&nbsp; 0~3</span><span>选中图元：&nbsp;0</span><span>隐藏图元：&nbsp;0</span></div>
  <div class="snaps">
    <button aria-label="正交"><svg class="ic" viewBox="0 0 20 20"><path class="d" d="M2 2v15h16M2 11h5v6"/></svg></button>
    <button aria-label="矩形框选" class="drop on"><svg class="ic" viewBox="0 0 20 20"><rect class="d" x="2" y="3" width="16" height="15" rx="2"/><circle class="b f" cx="3" cy="4" r="2.500"/></svg></button>
    <button aria-label="交点"><svg class="ic" viewBox="0 0 20 20"><path class="g" d="M1 1l18 18M19 1L1 19"/></svg></button>
    <button aria-label="角度" class="drop"><svg class="ic" viewBox="0 0 20 20"><path class="d" d="M16 3L2 17h16"/><circle class="d" cx="10" cy="9" r="1"/></svg></button>
    <button aria-label="输入" class="drop"><svg class="ic" viewBox="0 0 20 20"><path class="d" d="M0 5h8M4 1v8"/><path class="df" d="M8 12h12v6H8z"/></svg></button>
    <button aria-label="图层"><svg class="ic" viewBox="0 0 20 20"><path class="df" d="M4 3h10v11H4z"/><path class="d" d="M2 1h14v15H2zM17 4h2v9"/><path class="df" d="M13 11l7 7h-5z"/></svg></button>
    <button aria-label="折线"><svg class="ic" viewBox="0 0 20 20"><path class="d" d="M2 18C2 8 6 4 18 2"/><path class="df" d="M11 9l7 8h-6z"/></svg></button>
  </div>
  <p><svg class="ic" viewBox="0 0 20 20"><path class="k1" d="M8 12l-7 7M1 13v6h6M12 8l7-7M13 1h6v6"/></svg>按鼠标左键指定第一个角点，或拾取构件图元</p>
  <div class="notes"><a href="#"><i class="warn">!</i>合法性检查存在问题，请点击查看</a><a href="#"><i class="ok"></i>实时计算已完成</a></div>
</footer>

<div class="taskbar">
  <svg class="win" viewBox="0 0 40 11"><path fill="#111" d="M17 9.500l6-1V11h-6zM24 8.500l9-1.500v4h-9z"/></svg>
  <div class="tsearch"><svg viewBox="0 0 320 10"><path fill="none" stroke="#333" stroke-width="1.500" d="M22 10a6 6 0 0 1 10 0M51 9v1M64 9v1M78 9v1"/><path fill="#d9b08c" d="M263 10c0-8 15-8 15 0z"/><path fill="#7f8a99" d="M264 5c5-4 12-3 14 2-5-3-9-2-14-2z"/><path fill="#8fa8e0" d="M307 7h6v3h-6z"/></svg></div>
  <svg class="apps" viewBox="0 0 380 11"><path stroke="#333" d="M13 9v2M23 9v2M28 8v3"/><path fill="#28b8d4" d="M66 11c2-4 12-4 14 0z"/><path fill="#888" d="M246 9h19v2h-19z"/><path fill="#5a9cf0" d="M293 9h17v2h-17z"/><path fill="#fafafa" d="M326 0h41v11h-41z"/><path fill="#2a62f0" d="M339 11c0-3 18-3 18 0z"/></svg>
  <svg class="tray" viewBox="0 0 406 11"><path fill="none" stroke="#333" stroke-width="1.500" d="M2 11c1-2 3-2 4 0M166 11c1-2 3-2 4 0M237 9v2"/><path fill="#f06a50" d="M270 11l8-3v3z"/><path fill="#111" d="M369 9h20v2h-20z"/></svg>
</div>
</body>
</html>
```
FILE: styles.css
```css
* { box-sizing: border-box; }
body {
  margin: 0;
  height: 100vh;
  display: flex;
  flex-direction: column;
  overflow: hidden;
  background: #fff;
  color: #3c3c3c;
  font: 15px/20px "Noto Sans", "Noto Sans CJK SC", sans-serif;
}
button, input, select { font: inherit; color: inherit; }
button { background: none; border: 0; padding: 0; white-space: nowrap; }
a { color: inherit; text-decoration: none; }
h1, h2, p, ul { margin: 0; padding: 0; font: inherit; list-style: none; }
.defs { position: absolute; width: 0; height: 0; }

/* icon strokes */
.d, .b, .g, .r, .k, .k1, .k2 { fill: none; stroke-width: 1.4; stroke: #566074; }
.b { stroke: #2b80e8; }
.g { stroke: #b4b4b4; }
.r { stroke: #e03030; }
.k { stroke: #333; stroke-width: 1; }
.k1 { stroke: #555; stroke-width: 1.3; }
.k2 { stroke: #555; stroke-width: 2; }
.f { fill: #cfe2fa; }
.df { fill: #566074; }
.bf { fill: #2b80e8; }
.thick { stroke-width: 2.4; }
.thin { stroke-width: 1; }
.dash { stroke-dasharray: 3 2; }
.ic { width: 20px; height: 20px; flex: none; overflow: visible; }
.s16 { width: 16px; height: 16px; }

.drop::after {
  content: "";
  width: 8px;
  height: 5px;
  flex: none;
  background: #858585;
  clip-path: polygon(0 0, 100% 0, 50% 100%);
}

/* title bar */
.titlebar { display: flex; align-items: center; height: 30px; }
.logo { width: 26px; height: 26px; margin-left: 4px; }
.quick { display: flex; align-items: center; gap: 22px; margin-left: 25px; }
.quick button { display: flex; align-items: center; gap: 5px; }
.quick .tight { margin-right: -13px; }
.quick .more { width: 9px; height: 9px; border-top: 2px solid #666; }
.quick .more::after { content: ""; width: 8px; height: 4px; background: #666; clip-path: polygon(0 0, 100% 0, 50% 100%); }
h1 { margin-left: 45px; white-space: nowrap; }
.winctl { margin-left: auto; display: flex; gap: 32px; padding-right: 2px; }
.winctl svg { width: 14px; height: 14px; display: block; }

.menubar { display: flex; justify-content: space-between; height: 39px; border-bottom: 1px solid #e9e9e9; }
.tabs { display: flex; gap: 25px; padding-left: 24px; font-size: 16px; }
.tabs a { padding: 14px 4px 0; height: 39px; border-bottom: 3px solid transparent; white-space: nowrap; }
.tabs .on { color: #1a74e2; font-weight: bold; border-color: #1a74e2; }
.helpers { display: flex; align-items: center; gap: 10px; margin-right: -12px; padding-top: 12px; height: 38px; }
.helpers button { display: flex; align-items: center; gap: 2px; }
.helpers .help { font-size: 18px; width: 20px; margin-right: 4px; }
.ask { display: flex; align-items: center; width: 400px; height: 22px; border: 1px solid #e2e2e2; border-radius: 3px; padding: 0 8px 0 2px; margin-right: 2px; }
.ask input { flex: 1; min-width: 0; border: 0; padding: 0; text-indent: -6px; color: #111; background: none; }

/* ribbon */
.ribbon { display: flex; height: 126px; flex: none; border-bottom: 1px solid #dcdcdc; padding-top: 4px; }
.group { flex: none; border-right: 1px solid #dcdcdc; margin-bottom: 4px; display: flex; flex-direction: column; }
.g1 { width: 291px; } .g2 { width: 243px; } .g3 { width: 345px; } .g4 { width: 296px; }
.g5 { width: 86px; } .g6 { width: 133px; } .g7 { width: 97px; } .g8 { width: 390px; }
.body { display: flex; height: 91px; padding-left: 12px; }
.g1 .body { padding-left: 10px; gap: 8px; }
.g5 .body, .g6 .body, .g8 .body { padding-left: 10px; }
.g6 .body { gap: 8px; }
.cells { display: grid; grid-auto-rows: 30px; align-items: center; }
.cells button, .cells label { display: flex; align-items: center; gap: 4px; white-space: nowrap; text-align: left; }
.g1 .cells { grid-template-columns: 123px auto; }
.g2 .cells { grid-template-columns: 99px auto; }
.g3 .cells { grid-template-columns: 84px 138px auto; }
.g4 .cells { grid-template-columns: 67px 67px 79px auto; }
.g5 .cells { grid-template-columns: 42px auto; }
.g6 .cells { grid-template-columns: 30px auto; }
.g8 .cells { grid-template-columns: 41px 31px 38px 124px auto; }
.g8 .in { padding-left: 4px; }
.off { color: #b8b8b8; }
.big { display: flex; flex-direction: column; align-items: center; width: 50px; height: 88px; margin-top: 2px; gap: 11px; padding-top: 4px; border-radius: 3px; }
.big.on { background: #c3daf3; }
.big .cur { width: 26px; height: 34px; }
.big .i40 { width: 40px; height: 40px; }
.g6 .big, .g7 .big { gap: 7px; padding-top: 2px; }
.g7 .big { width: 60px; }
.g7 .body { padding-left: 8px; }
.below::after { content: ""; width: 8px; height: 5px; flex: none; background: #858585; clip-path: polygon(0 0, 100% 0, 50% 100%); }
.group h2 { display: flex; align-items: center; justify-content: center; gap: 8px; height: 30px; padding: 2px 0 0 4px; }
.group h2.drop { padding: 0; }
h2.drop::after { width: 9px; height: 6px; }

/* selectors under the ribbon */
.combos { display: flex; height: 39px; flex: none; background: #f0f0f0; }
.combos label { position: relative; width: 125px; border-right: 1px solid #d9d9d9; display: flex; }
.combos select { flex: 1; min-width: 0; appearance: none; border: 0; background: none; padding: 0 15px 2px 3px; }
.combos label::after { content: ""; position: absolute; right: 6px; top: 18px; width: 7px; height: 5px; background: #555; clip-path: polygon(0 0, 100% 0, 50% 100%); }

/* work area */
.work { flex: 1; min-height: 0; position: relative; display: grid; grid-template-columns: 160px 351px minmax(0, 1fr) 336px; column-gap: 5px; grid-template-rows: minmax(0, 1fr); background: #fafafa; }
.panel { background: #fff; border: 1px solid #d6d6d9; display: flex; flex-direction: column; min-height: 0; overflow: hidden; }
.phead { display: flex; align-items: center; height: 36px; flex: none; background: #eeeef0; padding-left: 8px; }
.grip { width: 8px; height: 18px; background: radial-gradient(circle, #777 1px, transparent 2px) 0 0 / 4px 5px; }
.phead span { margin-left: 16px; }
.x { width: 12px; height: 12px; margin: 0 12px 0 auto; background: linear-gradient(45deg, transparent 46%, #999 46% 54%, transparent 54%), linear-gradient(-45deg, transparent 46%, #999 46% 54%, transparent 54%); }
.ptab { padding: 7px 12px; height: 35px; align-self: flex-end; }
.ptab.on { background: #fff; color: #1a7cf0; margin-left: 14px; }

.navbody { flex: 1; min-height: 0; display: flex; }
.navbody > ul { width: 143px; background: #f5f6f8; }
.navbody li a { display: flex; align-items: center; gap: 17px; height: 52px; padding-left: 14px; position: relative; }
.navbody > ul > li:nth-child(even) > a { height: 53px; }
.navbody svg { width: 30px; height: 30px; flex: none; }
.navbody .on { background: #eaebef; color: #3f82ea; }
.navbody .sub { background: #fff; padding-bottom: 1px; }
.sub li .on, .sub li a { height: 35px; padding-left: 27px; background: #fff; }
.sub li .on { color: #1a7cf0; }
.dot { position: absolute; left: 44px; top: 6px; width: 8px; height: 8px; border-radius: 50%; background: #f00; }
.track { padding: 14px 0 0 5px; }
.track i { display: block; width: 5px; height: 516px; border-radius: 3px; background: #ebebeb; }

.mid { display: flex; flex-direction: column; gap: 7px; min-height: 0; }
.list { height: 424px; flex: none; }
.props { flex: 1; }
.tools { display: flex; gap: 11px; padding: 8px 13px 0; }
.tools button { width: 40px; height: 32px; background: #f4f4f5; border-radius: 3px; display: flex; align-items: center; justify-content: center; }
.pair { display: flex; gap: 1px; }
.tools .pair .drop { width: 15px; }
.tools .next { width: 32px; margin-left: auto; border: 1px solid #dadada; }
.next svg { width: 12px; height: 8px; fill: #555; }
.find { display: flex; align-items: center; height: 33px; margin: 9px 12px 0 10px; padding: 0 13px 0 15px; border-radius: 16px; background: #f4f4f4; }
.find input { flex: 1; min-width: 0; border: 0; padding: 0; background: none; }
.find input::placeholder { color: #8a8a8a; }
.tree { padding-top: 11px; }
.tree li { height: 30px; padding: 2px 0 0 26px; }
.tree span { display: inline-block; height: 26px; line-height: 26px; padding: 0 8px 0 5px; border-radius: 3px; white-space: nowrap; }
.tree .on { background: #c3daf3; }
.tree .branch { padding: 5px 0 0 7px; }
.branch::before { content: ""; display: inline-block; width: 8px; height: 5px; margin: 0 4px 2px 0; background: #8c8c8c; clip-path: polygon(0 0, 100% 0, 50% 100%); }

.scroll { position: relative; flex: 1; min-height: 0; overflow: hidden; }
.props table { border-collapse: collapse; table-layout: fixed; width: 334px; height: 310px; }
.props thead th { width: 126px; height: 28px; background: #eee; border: 1px solid #dadada; border-left: 0; font-weight: normal; padding: 0; }
.props thead th:nth-child(2) { width: 156px; }
.props thead th:nth-child(3) { width: 52px; }
.props thead .strong { font-weight: bold; }
.props tbody th { text-align: left; font-weight: normal; padding: 0 0 0 19px; color: #1a56ee; white-space: nowrap; }
.props tbody .plain { color: #3c3c3c; }
.props td { padding: 0; text-align: center; }
.props tr.on { background: #f3f3f3; }
.field { display: flex; align-items: center; height: 26px; margin-right: 1px; padding-left: 4px; border: 1px solid #d9d9d9; background: #fff; }
.field svg { width: 12px; height: 14px; flex: none; margin: 0 1px 4px; }
.field input { flex: 1; min-width: 0; border: 0; padding: 0; background: none; }
.on .field { border-color: #6d9be6; padding: 0 4px 0 6px; }
.field button { width: 20px; height: 18px; border: 1px solid #4a96e8; border-radius: 3px; background: #e3effc; color: #2b80e8; font-size: 8px; line-height: 14px; }
.props input[type=radio] { appearance: none; display: block; width: 10px; height: 10px; margin: 0 auto; border: 1px solid #b5b5b5; border-radius: 50%; background: #dcdcdc; }
.thumb { position: absolute; right: 5px; top: 57px; width: 5px; height: 60px; border-radius: 3px; background: #e9e9e9; }

/* drawing canvas */
.canvas { position: relative; background: #000; overflow: hidden; }
.cad { display: block; width: 100%; height: 100%; }
.ln { fill: none; stroke-width: 1; }
.gray { stroke: #8c8c8c; }
.cyan { stroke: #00b4b4; }
.bright { stroke: #00e4e4; }
.dashes { stroke-dasharray: 40 26; }
.yellow { stroke: #d8d800; }
.dim { stroke: #a4a400; }
.green { stroke: #00c000; }
.cross { stroke: #fff; stroke-width: 2; }
.txt { font: 300 28px "Roboto Condensed", "Liberation Sans Narrow", Roboto, sans-serif; fill: #c8c8c8; }
.mag { fill: #dc00dc; }
.faint { fill: #8a8a8a; }
.mark { font: 100 52px "Roboto Condensed", Roboto, sans-serif; fill: #00c000; text-anchor: middle; }
.axis { font: 300 19px Roboto, sans-serif; text-anchor: middle; }
.gy { fill: #0f0; }
.rx { fill: #f00; }
.handle { position: absolute; top: 346px; width: 20px; height: 77px; background: #4c4c4c; color: #bbb; font-size: 14px; }
.left { left: 0; clip-path: polygon(0 0, 80% 7%, 100% 14%, 100% 86%, 80% 93%, 0 100%); }
.right { right: 0; clip-path: polygon(100% 0, 20% 7%, 0 14%, 0 86%, 20% 93%, 100% 100%); }
.viewbar { position: absolute; right: 0; top: 0; width: 41px; height: 307px; padding: 16px 2px 0 0; background: #fff; border-radius: 4px; display: flex; flex-direction: column; align-items: center; gap: 10px; }
.viewbar button { position: relative; display: flex; flex-direction: column; align-items: center; gap: 8px; }
.viewbar svg { width: 26px; height: 26px; display: block; }
.viewbar b { position: absolute; left: 3px; bottom: 1px; font-size: 9px; line-height: 12px; color: #2b80e8; }
.viewbar .below::after { background: #566074; }
.viewbar hr { width: 29px; margin: -1px 0 -2px; border: 0; border-top: 1px solid #888; }

/* display settings */
.display { border-right: 0; }
.display .x { margin-right: 0; }
.dtabs { display: flex; align-items: flex-end; gap: 4px; height: 33px; padding-left: 3px; border-bottom: 1px solid #c9cdd6; flex: none; }
.dtabs a { height: 26px; padding: 3px 8px; background: #dedede; border-radius: 3px 3px 0 0; }
.dtabs .on { height: 29px; padding-top: 4px; margin-bottom: -1px; background: #fff; border: 1px solid #c9cdd6; border-bottom: 0; color: #1a7cf0; }
.dscroll { flex: none; height: 650px; margin: 0 6px 0 3px; padding-top: 3px; overflow: hidden; border-bottom: 1px solid #d0d0d0; }
.display table { border-collapse: collapse; table-layout: fixed; width: 326px; height: 657px; }
.display th, .display td { border: 1px solid #dcdcdc; padding: 0; }
.display thead th { height: 25px; font-weight: normal; }
.display thead th:nth-child(n+2) { width: 79px; }
.display thead .sel { background: #80b8f8; color: #fff; font-weight: bold; }
.display tbody th { text-align: left; font-weight: normal; padding-left: 51px; white-space: nowrap; background: linear-gradient(#dcdcdc, #dcdcdc) 22px 0 / 1px 100% no-repeat, linear-gradient(#dcdcdc, #dcdcdc) 22px 50% / 21px 1px no-repeat, linear-gradient(#dcdcdc, #dcdcdc) 10px 0 / 1px 100% no-repeat; }
.display tbody .end th { background-size: 1px 50%, 21px 1px, 1px 100%; }
.display .l0 th, .display .l1 th { padding-left: 2px; background: none; }
.display .l1 th { padding-left: 15px; background: linear-gradient(#dcdcdc, #dcdcdc) 10px 0 / 1px 100% no-repeat; }
.tog { display: inline-block; vertical-align: middle; width: 16px; height: 16px; margin: -2px 8px 0 0; border: 1px solid #999; border-radius: 2px; background: linear-gradient(#555, #555) center / 6px 1px no-repeat #fff; }
.display td.focus { outline: 2px solid #808080; outline-offset: -2px; }
input[type=checkbox] { appearance: none; display: block; position: relative; width: 18px; height: 18px; margin: 0 auto; border: 1px solid #999; border-radius: 3px; background: #fff; }
input[type=checkbox]:checked { background: #2b7fe3; border-color: #2b7fe3; }
input[type=checkbox]:checked::after { content: ""; position: absolute; left: 5px; top: 1px; width: 6px; height: 11px; border: solid #fff; border-width: 0 2px 2px 0; transform: rotate(42deg); }
input[type=checkbox].mixed::after { content: ""; position: absolute; inset: 2px; border: 1px solid #4a96e8; background: #94c4fa; }
input[type=checkbox]:disabled { background: #efefef; border-color: #b5b5b5; }
.cells label input[type=checkbox] { margin: 0; }
.dfoot { padding: 8px 0 0 225px; }
.dfoot button { width: 112px; height: 32px; border: 1px solid #c9c9c9; border-radius: 4px; background: #fff; }
.pointer { position: absolute; left: 370px; top: 521px; width: 206px; height: 90px; }

/* status bar */
.status { display: flex; align-items: center; height: 38px; flex: none; background: #fbfbfb; white-space: nowrap; overflow: hidden; }
.facts { display: grid; grid-template-columns: 113px 175px 137px 138px; padding-left: 2px; }
.snaps { display: flex; gap: 6px; }
.snaps button { display: flex; align-items: center; justify-content: center; gap: 7px; width: 31px; height: 31px; border: 1px solid #8e8e8e; border-radius: 4px; background: #fff; }
.snaps .drop { width: 44px; }
.snaps .on { background: #d6e6fa; border-color: #2b80e8; }
.status p { display: flex; align-items: center; gap: 4px; margin-left: 18px; }
.notes { display: flex; gap: 16px; margin-left: auto; }
.notes a { display: flex; align-items: center; gap: 7px; }
.notes i { width: 18px; height: 18px; border-radius: 50%; color: #fff; font: bold 14px/18px Roboto, sans-serif; text-align: center; position: relative; }
.warn { background: #f58f2c; }
.ok { background: #62b81c; }
.ok::after { content: ""; position: absolute; left: 6px; top: 3px; width: 5px; height: 9px; border: solid #fff; border-width: 0 2px 2px 0; transform: rotate(42deg); }

.taskbar { display: flex; height: 11px; flex: none; background: #ededed; overflow: hidden; }
.taskbar svg { display: block; height: 11px; flex: none; }
.win { width: 40px; }
.tsearch { width: 322px; margin-left: 6px; border: 1px solid #bdbdbd; border-bottom: 0; background: #fff; }
.tsearch svg { width: 320px; height: 10px; }
.apps { width: 380px; }
.tray { width: 406px; margin-left: auto; }
```
